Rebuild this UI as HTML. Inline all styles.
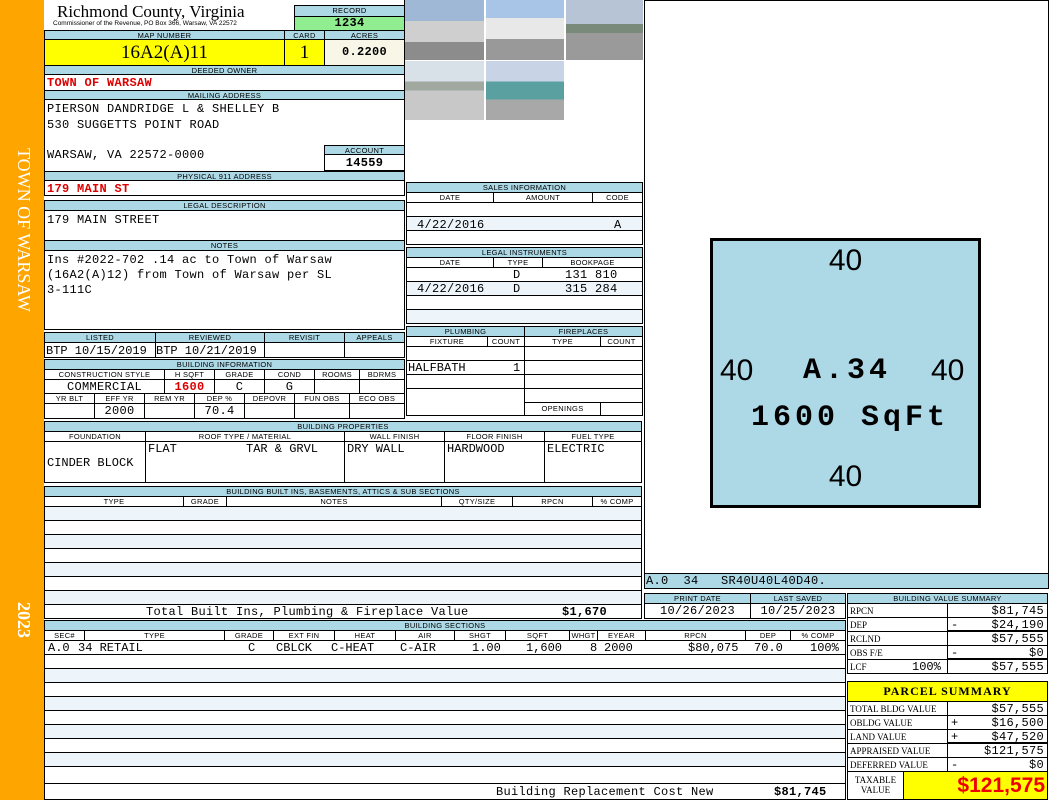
<!DOCTYPE html>
<html><head><meta charset="utf-8"><style>
*{box-sizing:border-box;margin:0;padding:0}
body{width:1050px;height:800px;position:relative;background:#fff;overflow:hidden;font-family:"Liberation Mono",monospace;}
div{position:absolute}
.h{background:#add8e6;border:1px solid #000;font:7.5px/9px "Liberation Sans",sans-serif;text-align:center;color:#000;white-space:nowrap;overflow:hidden;letter-spacing:0.3px}
.c{border:1px solid #000;background:#fff;font-size:12px;line-height:14px;white-space:nowrap;overflow:hidden;padding-left:2px;letter-spacing:0.3px}
.l{background:#eef5fa}
.ctr{text-align:center;padding-left:0}
.r{text-align:right;padding-right:3px}
.red{color:#d00;font-weight:bold}
.s{font-family:"Liberation Serif",serif;letter-spacing:0}
.big{font-family:"Liberation Sans",sans-serif;font-size:30px}
.bm{font:bold 30px "Liberation Mono",monospace;letter-spacing:4px}
</style></head><body>
<!-- sidebar -->
<div style="left:0;top:0;width:44px;height:800px;background:#ffa500"></div>
<div style="left:8px;top:148px;width:26px;height:230px;writing-mode:vertical-rl;color:#fff;font:18px 'Liberation Serif',serif;">TOWN OF WARSAW</div>
<div style="left:8px;top:602px;width:26px;height:60px;writing-mode:vertical-rl;color:#fff;font:bold 18px 'Liberation Serif',serif;">2023</div>

<!-- title -->
<div style="left:57px;top:2px;font:17px/20px 'Liberation Serif',serif">Richmond County, Virginia</div>
<div style="left:53px;top:20px;font:6.5px/8px 'Liberation Sans',sans-serif">Commissioner of the Revenue, PO Box 366, Warsaw, VA 22572</div>
<div class="h" style="left:294px;top:5px;width:111px;height:12px;line-height:10px">RECORD</div>
<div class="c ctr" style="left:294px;top:16px;width:111px;height:15px;background:#90ee90;font-weight:bold;font-size:12px;line-height:13px">1234</div>
<div class="h" style="left:44px;top:30px;width:241px;height:10px">MAP NUMBER</div>
<div class="h" style="left:284px;top:30px;width:41px;height:10px">CARD</div>
<div class="h" style="left:324px;top:30px;width:81px;height:10px">ACRES</div>
<div class="c ctr s" style="left:44px;top:39px;width:241px;height:27px;background:#ff0;font-size:19px;line-height:25px">16A2(A)11</div>
<div class="c ctr s" style="left:284px;top:39px;width:41px;height:27px;background:#ff0;font-size:19px;line-height:25px">1</div>
<div class="c ctr" style="left:324px;top:39px;width:81px;height:27px;background:#f8f6e6;font-weight:bold;line-height:25px">0.2200</div>
<div class="h" style="left:44px;top:65px;width:361px;height:10px">DEEDED OWNER</div>
<div class="c red" style="left:44px;top:74px;width:361px;height:17px;line-height:17px">TOWN OF WARSAW</div>
<div class="h" style="left:44px;top:90px;width:361px;height:10px">MAILING ADDRESS</div>
<div class="c" style="left:44px;top:99px;width:361px;height:73px;line-height:16px;padding-top:1px">PIERSON DANDRIDGE L &amp; SHELLEY B<br>530 SUGGETTS POINT ROAD<br><span style="display:block;height:14px"></span>WARSAW, VA 22572-0000</div>
<div class="h" style="left:324px;top:145px;width:81px;height:10px">ACCOUNT</div>
<div class="c ctr" style="left:324px;top:154px;width:81px;height:17px;font-weight:bold;line-height:17px">14559</div>
<div class="h" style="left:44px;top:171px;width:361px;height:10px">PHYSICAL 911 ADDRESS</div>
<div class="c red" style="left:44px;top:180px;width:361px;height:16px;line-height:16px">179 MAIN ST</div>
<div class="h" style="left:44px;top:200px;width:361px;height:11px">LEGAL DESCRIPTION</div>
<div class="c" style="left:44px;top:210px;width:361px;height:31px;padding-top:2px">179 MAIN STREET</div>
<div class="h" style="left:44px;top:240px;width:361px;height:11px">NOTES</div>
<div class="c" style="left:44px;top:250px;width:361px;height:80px;line-height:15px;padding-top:2px">Ins #2022-702 .14 ac to Town of Warsaw<br>(16A2(A)12) from Town of Warsaw per SL<br>3-111C</div>

<div class="h" style="left:44px;top:332px;width:112px;height:11px">LISTED</div>
<div class="h" style="left:155px;top:332px;width:110px;height:11px">REVIEWED</div>
<div class="h" style="left:264px;top:332px;width:81px;height:11px">REVISIT</div>
<div class="h" style="left:344px;top:332px;width:61px;height:11px">APPEALS</div>
<div class="c" style="left:44px;top:342px;width:112px;height:16px;padding-left:1px;line-height:16px;letter-spacing:0">BTP 10/15/2019</div>
<div class="c" style="left:155px;top:342px;width:110px;height:16px;padding-left:0;line-height:16px;letter-spacing:0">BTP 10/21/2019</div>
<div class="c" style="left:264px;top:342px;width:81px;height:16px"></div>
<div class="c" style="left:344px;top:342px;width:61px;height:16px"></div>

<div class="h" style="left:44px;top:359px;width:361px;height:11px">BUILDING INFORMATION</div>
<div class="h" style="left:44px;top:369px;width:121px;height:11px;background:#fff">CONSTRUCTION STYLE</div>
<div class="h" style="left:164px;top:369px;width:51px;height:11px;background:#fff">H SQFT</div>
<div class="h" style="left:214px;top:369px;width:51px;height:11px;background:#fff">GRADE</div>
<div class="h" style="left:264px;top:369px;width:51px;height:11px;background:#fff">COND</div>
<div class="h" style="left:314px;top:369px;width:46px;height:11px;background:#fff">ROOMS</div>
<div class="h" style="left:359px;top:369px;width:46px;height:11px;background:#fff">BDRMS</div>
<div class="c ctr" style="left:44px;top:379px;width:121px;height:15px">COMMERCIAL</div>
<div class="c ctr red" style="left:164px;top:379px;width:51px;height:15px">1600</div>
<div class="c ctr" style="left:214px;top:379px;width:51px;height:15px">C</div>
<div class="c ctr" style="left:264px;top:379px;width:51px;height:15px">G</div>
<div class="c" style="left:314px;top:379px;width:46px;height:15px"></div>
<div class="c" style="left:359px;top:379px;width:46px;height:15px"></div>
<div class="h" style="left:44px;top:393px;width:51px;height:11px;background:#fff">YR BLT</div>
<div class="h" style="left:94px;top:393px;width:51px;height:11px;background:#fff">EFF YR</div>
<div class="h" style="left:144px;top:393px;width:51px;height:11px;background:#fff">REM YR</div>
<div class="h" style="left:194px;top:393px;width:51px;height:11px;background:#fff">DEP %</div>
<div class="h" style="left:244px;top:393px;width:51px;height:11px;background:#fff">DEPOVR</div>
<div class="h" style="left:294px;top:393px;width:56px;height:11px;background:#fff">FUN OBS</div>
<div class="h" style="left:349px;top:393px;width:56px;height:11px;background:#fff">ECO OBS</div>
<div class="c" style="left:44px;top:403px;width:51px;height:16px"></div>
<div class="c ctr" style="left:94px;top:403px;width:51px;height:16px">2000</div>
<div class="c" style="left:144px;top:403px;width:51px;height:16px"></div>
<div class="c ctr" style="left:194px;top:403px;width:51px;height:16px">70.4</div>
<div class="c" style="left:244px;top:403px;width:51px;height:16px"></div>
<div class="c" style="left:294px;top:403px;width:56px;height:16px"></div>
<div class="c" style="left:349px;top:403px;width:56px;height:16px"></div>

<!-- building properties -->
<div class="h" style="left:44px;top:421px;width:598px;height:11px">BUILDING PROPERTIES</div>
<div class="h" style="left:44px;top:431px;width:102px;height:11px;background:#fff">FOUNDATION</div>
<div class="h" style="left:145px;top:431px;width:200px;height:11px;background:#fff">ROOF TYPE / MATERIAL</div>
<div class="h" style="left:344px;top:431px;width:101px;height:11px;background:#fff">WALL FINISH</div>
<div class="h" style="left:444px;top:431px;width:101px;height:11px;background:#fff">FLOOR FINISH</div>
<div class="h" style="left:544px;top:431px;width:98px;height:11px;background:#fff">FUEL TYPE</div>
<div class="c" style="left:44px;top:441px;width:102px;height:42px;padding-top:14px;letter-spacing:0">CINDER BLOCK</div>
<div class="c" style="left:145px;top:441px;width:200px;height:42px;letter-spacing:0">FLAT<span style="position:absolute;left:100px">TAR &amp; GRVL</span></div>
<div class="c" style="left:344px;top:441px;width:101px;height:42px;letter-spacing:0">DRY WALL</div>
<div class="c" style="left:444px;top:441px;width:101px;height:42px;letter-spacing:0">HARDWOOD</div>
<div class="c" style="left:544px;top:441px;width:98px;height:42px;letter-spacing:0">ELECTRIC</div>

<!-- built ins -->
<div class="h" style="left:44px;top:486px;width:598px;height:11px">BUILDING BUILT INS, BASEMENTS, ATTICS &amp; SUB SECTIONS</div>
<div class="h" style="left:44px;top:496px;width:140px;height:11px;background:#fff">TYPE</div>
<div class="h" style="left:183px;top:496px;width:44px;height:11px;background:#fff">GRADE</div>
<div class="h" style="left:226px;top:496px;width:216px;height:11px;background:#fff">NOTES</div>
<div class="h" style="left:441px;top:496px;width:72px;height:11px;background:#fff">QTY/SIZE</div>
<div class="h" style="left:512px;top:496px;width:81px;height:11px;background:#fff">RPCN</div>
<div class="h" style="left:592px;top:496px;width:50px;height:11px;background:#fff">% COMP</div>
<div class="c l" style="left:44px;top:506px;width:598px;height:15px"></div>
<div class="c" style="left:44px;top:520px;width:598px;height:15px"></div>
<div class="c l" style="left:44px;top:534px;width:598px;height:15px"></div>
<div class="c" style="left:44px;top:548px;width:598px;height:15px"></div>
<div class="c l" style="left:44px;top:562px;width:598px;height:15px"></div>
<div class="c" style="left:44px;top:576px;width:598px;height:15px"></div>
<div class="c l" style="left:44px;top:590px;width:598px;height:15px"></div>
<div class="c" style="left:44px;top:604px;width:598px;height:15px"><span style="position:absolute;left:101px">Total Built Ins, Plumbing &amp; Fireplace Value</span><span style="position:absolute;left:517px;font-weight:bold">$1,670</span></div>

<!-- building sections -->
<div class="h" style="left:44px;top:620px;width:802px;height:11px">BUILDING SECTIONS</div>
<div class="h" style="left:44px;top:630px;width:41px;height:11px;background:#fff">SEC#</div>
<div class="h" style="left:84px;top:630px;width:141px;height:11px;background:#fff">TYPE</div>
<div class="h" style="left:224px;top:630px;width:50px;height:11px;background:#fff">GRADE</div>
<div class="h" style="left:273px;top:630px;width:62px;height:11px;background:#fff">EXT FIN</div>
<div class="h" style="left:334px;top:630px;width:62px;height:11px;background:#fff">HEAT</div>
<div class="h" style="left:395px;top:630px;width:60px;height:11px;background:#fff">AIR</div>
<div class="h" style="left:454px;top:630px;width:52px;height:11px;background:#fff">SHGT</div>
<div class="h" style="left:505px;top:630px;width:65px;height:11px;background:#fff">SQFT</div>
<div class="h" style="left:569px;top:630px;width:29px;height:11px;background:#fff">WHGT</div>
<div class="h" style="left:597px;top:630px;width:49px;height:11px;background:#fff">EYEAR</div>
<div class="h" style="left:645px;top:630px;width:101px;height:11px;background:#fff">RPCN</div>
<div class="h" style="left:745px;top:630px;width:46px;height:11px;background:#fff">DEP</div>
<div class="h" style="left:790px;top:630px;width:56px;height:11px;background:#fff">% COMP</div>
<div class="c" style="left:44px;top:640px;width:802px;height:15px;letter-spacing:0">
<span style="position:absolute;left:3px">A.0</span><span style="position:absolute;left:33px">34 RETAIL</span><span style="position:absolute;left:203px">C</span><span style="position:absolute;left:231px">CBLCK</span><span style="position:absolute;left:286px">C-HEAT</span><span style="position:absolute;left:355px">C-AIR</span><span style="position:absolute;left:427px">1.00</span><span style="position:absolute;left:481px">1,600</span><span style="position:absolute;left:545px">8</span><span style="position:absolute;left:559px">2000</span><span style="position:absolute;left:643px">$80,075</span><span style="position:absolute;left:709px">70.0</span><span style="position:absolute;left:765px">100%</span></div>
<div class="c" style="left:44px;top:654px;width:802px;height:15px"></div>
<div class="c l" style="left:44px;top:668px;width:802px;height:15px"></div>
<div class="c" style="left:44px;top:682px;width:802px;height:15px"></div>
<div class="c l" style="left:44px;top:696px;width:802px;height:15px"></div>
<div class="c" style="left:44px;top:710px;width:802px;height:15px"></div>
<div class="c l" style="left:44px;top:724px;width:802px;height:15px"></div>
<div class="c" style="left:44px;top:738px;width:802px;height:15px"></div>
<div class="c l" style="left:44px;top:752px;width:802px;height:15px"></div>
<div class="c" style="left:44px;top:766px;width:802px;height:18px"></div>
<div class="c" style="left:44px;top:783px;width:802px;height:17px;line-height:16px"><span style="position:absolute;left:451px">Building Replacement Cost New</span><span style="position:absolute;left:729px;font-weight:bold">$81,745</span></div>

<!-- photos -->
<div style="left:405px;top:0;width:79px;height:60px;background:linear-gradient(#9fb8d6 0 35%,#cfcfcf 35% 70%,#8c8c8c 70%)"></div>
<div style="left:486px;top:0;width:78px;height:60px;background:linear-gradient(#a8c4e6 0 30%,#e8e8e8 30% 65%,#999 65%)"></div>
<div style="left:566px;top:0;width:77px;height:60px;background:linear-gradient(#b6c4d6 0 40%,#7a8a7a 40% 55%,#9a9a9a 55%)"></div>
<div style="left:405px;top:61px;width:79px;height:59px;background:linear-gradient(#d8e0e8 0 35%,#a0a8a0 35% 50%,#c8c8c8 50%)"></div>
<div style="left:486px;top:61px;width:78px;height:59px;background:linear-gradient(#c8d4e6 0 35%,#5aa0a0 35% 65%,#a8a8a8 65%)"></div>
<div style="left:404px;top:0;width:1px;height:182px;background:#000"></div>

<!-- sales -->
<div class="h" style="left:406px;top:182px;width:237px;height:11px">SALES INFORMATION</div>
<div class="h" style="left:406px;top:192px;width:88px;height:11px;background:#fff">DATE</div>
<div class="h" style="left:493px;top:192px;width:100px;height:11px;background:#fff">AMOUNT</div>
<div class="h" style="left:592px;top:192px;width:51px;height:11px;background:#fff">CODE</div>
<div class="c" style="left:406px;top:202px;width:237px;height:15px"></div>
<div class="c l" style="left:406px;top:216px;width:237px;height:15px;padding-left:10px;line-height:16px">4/22/2016<span style="position:absolute;left:207px">A</span></div>
<div class="c" style="left:406px;top:230px;width:237px;height:15px"></div>
<div class="h" style="left:406px;top:247px;width:237px;height:11px">LEGAL INSTRUMENTS</div>
<div class="h" style="left:406px;top:257px;width:88px;height:11px;background:#fff">DATE</div>
<div class="h" style="left:493px;top:257px;width:50px;height:11px;background:#fff">TYPE</div>
<div class="h" style="left:542px;top:257px;width:101px;height:11px;background:#fff">BOOKPAGE</div>
<div class="c" style="left:406px;top:267px;width:237px;height:15px"><span style="position:absolute;left:106px">D</span><span style="position:absolute;left:158px">131 810</span></div>
<div class="c l" style="left:406px;top:281px;width:237px;height:15px;padding-left:10px">4/22/2016<span style="position:absolute;left:106px">D</span><span style="position:absolute;left:158px">315 284</span></div>
<div class="c" style="left:406px;top:295px;width:237px;height:15px"></div>
<div class="c l" style="left:406px;top:309px;width:237px;height:15px"></div>
<div class="h" style="left:406px;top:326px;width:119px;height:11px">PLUMBING</div>
<div class="h" style="left:524px;top:326px;width:119px;height:11px">FIREPLACES</div>
<div class="h" style="left:406px;top:336px;width:82px;height:11px;background:#fff">FIXTURE</div>
<div class="h" style="left:487px;top:336px;width:38px;height:11px;background:#fff">COUNT</div>
<div class="h" style="left:524px;top:336px;width:77px;height:11px;background:#fff">TYPE</div>
<div class="h" style="left:600px;top:336px;width:43px;height:11px;background:#fff">COUNT</div>
<div class="c" style="left:406px;top:346px;width:119px;height:15px"></div>
<div class="c" style="left:406px;top:360px;width:119px;height:15px;padding-left:0"><span style="position:absolute;left:1px;letter-spacing:0">HALFBATH</span><span style="position:absolute;left:106px">1</span></div>
<div class="c" style="left:406px;top:374px;width:119px;height:15px"></div>
<div class="c" style="left:406px;top:388px;width:119px;height:28px"></div>
<div class="c" style="left:524px;top:346px;width:119px;height:15px"></div>
<div class="c" style="left:524px;top:360px;width:119px;height:15px"></div>
<div class="c" style="left:524px;top:374px;width:119px;height:15px"></div>
<div class="c" style="left:524px;top:388px;width:119px;height:15px"></div>
<div class="h" style="left:524px;top:402px;width:77px;height:14px;background:#fff;line-height:12px">OPENINGS</div>
<div class="c" style="left:600px;top:402px;width:43px;height:14px"></div>

<!-- sketch -->
<div style="left:644px;top:0;width:405px;height:589px;border:1px solid #000"></div>
<div style="left:710px;top:238px;width:271px;height:270px;background:#add8e6;border:3px solid #000"></div>
<div class="big" style="left:710px;top:244px;width:271px;text-align:center">40</div>
<div class="big" style="left:710px;top:460px;width:271px;text-align:center">40</div>
<div class="big" style="left:720px;top:354px">40</div>
<div class="big" style="left:931px;top:354px">40</div>
<div class="bm" style="left:803px;top:354px">A.34</div>
<div class="bm" style="left:751px;top:401px">1600 SqFt</div>
<div class="c" style="left:644px;top:573px;width:405px;height:16px;background:#add8e6;padding-left:1px;line-height:15px">A.0&nbsp;&nbsp;34&nbsp;&nbsp;&nbsp;SR40U40L40D40.</div>

<div class="h" style="left:644px;top:593px;width:107px;height:11px">PRINT DATE</div>
<div class="h" style="left:750px;top:593px;width:96px;height:11px">LAST SAVED</div>
<div class="c ctr" style="left:644px;top:603px;width:107px;height:16px;line-height:15px">10/26/2023</div>
<div class="c ctr" style="left:750px;top:603px;width:96px;height:16px;line-height:15px">10/25/2023</div>

<!-- value summary -->
<div class="h" style="left:847px;top:593px;width:201px;height:11px">BUILDING VALUE SUMMARY</div>
<div class="c s" style="left:847px;top:603px;width:101px;height:15px;font-size:9px">RPCN</div>
<div class="c r" style="left:947px;top:603px;width:101px;height:15px">$81,745</div>
<div class="c s" style="left:847px;top:617px;width:101px;height:15px;font-size:9px">DEP</div>
<div class="c r" style="left:947px;top:617px;width:101px;height:15px;border-bottom:2px solid #000"><span style="position:absolute;left:3px">-</span>$24,190</div>
<div class="c s" style="left:847px;top:631px;width:101px;height:15px;font-size:9px">RCLND</div>
<div class="c r" style="left:947px;top:631px;width:101px;height:15px">$57,555</div>
<div class="c s" style="left:847px;top:645px;width:101px;height:15px;font-size:9px">OBS F/E</div>
<div class="c r" style="left:947px;top:645px;width:101px;height:15px;border-bottom:2px solid #000"><span style="position:absolute;left:3px">-</span>$0</div>
<div class="c s" style="left:847px;top:659px;width:101px;height:15px;font-size:9px">LCF<span style="position:absolute;left:64px;font-family:'Liberation Mono';font-size:12px">100%</span></div>
<div class="c r" style="left:947px;top:659px;width:101px;height:15px">$57,555</div>

<div class="c ctr s" style="left:847px;top:681px;width:201px;height:21px;background:#ff0;font-weight:bold;font-size:12px;line-height:19px;letter-spacing:1px">PARCEL SUMMARY</div>
<div class="c s" style="left:847px;top:701px;width:101px;height:15px;font-size:9px">TOTAL BLDG VALUE</div>
<div class="c r" style="left:947px;top:701px;width:101px;height:15px">$57,555</div>
<div class="c s" style="left:847px;top:715px;width:101px;height:15px;font-size:9px">OBLDG VALUE</div>
<div class="c r" style="left:947px;top:715px;width:101px;height:15px"><span style="position:absolute;left:3px">+</span>$16,500</div>
<div class="c s" style="left:847px;top:729px;width:101px;height:15px;font-size:9px">LAND VALUE</div>
<div class="c r" style="left:947px;top:729px;width:101px;height:15px;border-bottom:2px solid #000"><span style="position:absolute;left:3px">+</span>$47,520</div>
<div class="c s" style="left:847px;top:743px;width:101px;height:15px;font-size:9px">APPRAISED VALUE</div>
<div class="c r" style="left:947px;top:743px;width:101px;height:15px">$121,575</div>
<div class="c s" style="left:847px;top:757px;width:101px;height:15px;font-size:9px">DEFERRED VALUE</div>
<div class="c r" style="left:947px;top:757px;width:101px;height:15px"><span style="position:absolute;left:3px">-</span>$0</div>
<div class="c ctr s" style="left:847px;top:771px;width:57px;height:29px;font-size:9px;line-height:10px;padding-top:3px">TAXABLE<br>VALUE</div>
<div class="c r" style="left:903px;top:771px;width:145px;height:29px;background:#ff0;color:#e00;font:bold 21px/27px 'Liberation Sans',sans-serif;padding-right:2px;letter-spacing:0">$121,575</div>
</body></html>
